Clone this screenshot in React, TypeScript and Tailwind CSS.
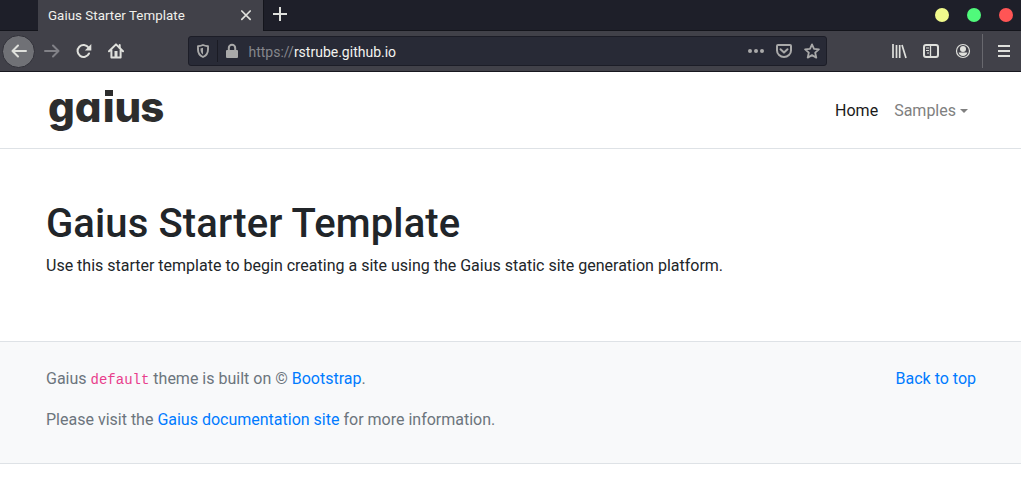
import type { ReactNode } from 'react';

function Icon({ children, className = '' }: { children: ReactNode; className?: string }) {
  return (
    <svg viewBox="0 0 16 16" className={`block size-4 shrink-0 ${className}`} fill="none" stroke="currentColor" strokeWidth="2" strokeLinecap="round" strokeLinejoin="round">
      {children}
    </svg>
  );
}

function TabBar() {
  return (
    <div className="flex h-[31px] bg-[#1e1f29] text-[#dfe0dc]">
      <div className="w-[38px] shrink-0 border-b border-[#14151c]" />
      <div className="flex w-[226px] shrink-0 items-center border-r border-[#14151c] bg-[#414149] pl-[10px] pr-[9px]">
        <span className="flex-1 whitespace-nowrap text-[13.33px] leading-[30px] tracking-[0.04px] text-[#f0f0ec]">Gaius Starter Template</span>
        <Icon>
          <path d="M3.800 3l8.400 8.400M12.200 3l-8.400 8.400" strokeWidth="1.7" />
        </Icon>
      </div>
      <div className="flex flex-1 items-center border-b border-[#14151c] pl-2 pr-2">
        <Icon className="-mt-[2px]">
          <path d="M8 1v14M1 8h14" strokeLinecap="butt" />
        </Icon>
        <div className="ml-auto flex gap-[18px]">
          <span className="size-[14px] rounded-full bg-[#f1fa8c]" />
          <span className="size-[14px] rounded-full bg-[#50fa7b]" />
          <span className="size-[14px] rounded-full bg-[#ff5555]" />
        </div>
      </div>
    </div>
  );
}

function AddressBar() {
  return (
    <div className="flex h-[30px] w-[639px] items-center rounded-[3px] border border-[#1c1d27] bg-[#282a36] px-[6px] text-[#a9a9a9]">
      <Icon>
        <path d="M8 2c-1.700 .8-3.400 1.100-5 1.300v3.200c0 3.500 1.500 5.900 5 7.500 3.500-1.600 5-4 5-7.500V3.300C11.400 3.100 9.700 2.800 8 2z" strokeWidth="1.9" />
        <path d="M8 4.800v6.700C6.200 10.300 5.500 8.800 5.500 5.500z" fill="currentColor" stroke="none" />
      </Icon>
      <div className="ml-[6px] mr-[6px] h-[22px] w-px bg-[#1a1b24]" />
      <Icon>
        <rect x="2" y="7" width="12" height="8" rx="1" fill="currentColor" stroke="none" />
        <path d="M4.800 8V5a3.200 3.200 0 0 1 6.400 0v3" />
      </Icon>
      <span className="ml-[8px] pl-[0.500px] pt-[2px] text-[14px] leading-5 text-[#85868c]">
        https://<span className="text-[#f3f3ef]">rstrube.github.io</span>
      </span>
      <div className="ml-auto flex gap-3">
        <Icon>
          <g fill="currentColor" stroke="none">
            <circle cx="2" cy="8" r="2" />
            <circle cx="8" cy="8" r="2" />
            <circle cx="14" cy="8" r="2" />
          </g>
        </Icon>
        <Icon>
          <path d="M2 2h12a1 1 0 0 1 1 1v4.500a7 6.500 0 0 1-14 0V3a1 1 0 0 1 1-1z" />
          <path d="M4.500 6.300L8 9.600l3.500-3.300" />
        </Icon>
        <Icon>
          <path d="M8 1.400l2 4.500 4.900.5-3.700 3.300 1.100 4.900L8 12.100l-4.300 2.500 1.100-4.900L1.100 6.400 6 5.900z" strokeWidth="1.800" />
        </Icon>
      </div>
    </div>
  );
}

function Toolbar() {
  return (
    <div className="flex h-[41px] items-center border-b border-[#17171f] bg-[#414149] pl-[2px] pr-[9px] text-[#dfe0dc]">
      <div className="flex size-[33px] items-center justify-center rounded-full border border-[#303038] bg-[#707176]">
        <Icon>
          <path d="M15 8H1.500M7 2.500L1.500 8 7 13.500" />
        </Icon>
      </div>
      <Icon className="ml-[9px] text-[#818187]">
        <path d="M1 8h13.500M9 2.500L14.500 8 9 13.500" />
      </Icon>
      <Icon className="ml-4">
        <path d="M13 10.500A6 6 0 1 1 12.500 4.500" />
        <path d="M15.300 1v6.500H8.800z" fill="currentColor" stroke="none" />
      </Icon>
      <Icon className="ml-4">
        <path d="M1 8.200L8 1.400l7 6.800M3.400 7v7.600h9.200V7" />
        <path d="M6.500 8h3v6h-3z" fill="currentColor" stroke="none" />
        <path d="M11.700 2v3" />
      </Icon>
      <div className="ml-16">
        <AddressBar />
      </div>
      <Icon className="ml-16">
        <path d="M2 1v14M5.500 2v13M8.700 2v13M11 2l4 13" strokeWidth="1.700" strokeLinecap="butt" />
      </Icon>
      <Icon className="ml-4">
        <rect x="1" y="2" width="14" height="12" rx="2" />
        <path d="M7.500 2v12" strokeWidth="1.300" />
        <path d="M3 5h3M3 7.500h3M4 10h2" strokeWidth="1" strokeLinecap="butt" />
      </Icon>
      <Icon className="ml-4">
        <circle cx="8" cy="8" r="6.500" strokeWidth="1.200" />
        <circle cx="8" cy="6" r="3" fill="currentColor" stroke="none" />
        <path d="M3.600 9.500h8.800c-.5 2-2.200 3.500-4.400 3.500s-3.900-1.500-4.400-3.500z" fill="currentColor" stroke="none" />
      </Icon>
      <div className="ml-[11px] h-[34px] w-px bg-[#68686e]" />
      <Icon className="ml-auto">
        <path d="M2 3h12M2 8h12M2 13h12" strokeLinecap="butt" />
      </Icon>
    </div>
  );
}

export default function App() {
  return (
    <div className="h-[478px] w-[1021px] overflow-hidden bg-white text-base text-[#212529] font-['Roboto',sans-serif]">
      <TabBar />
      <Toolbar />
      <header className="flex h-[77px] items-center justify-between border-b border-[#dee2e6] pl-[48px] pr-[53px]">
        <a className="-mt-[7px] text-[42px] font-extrabold leading-[44px] text-[#2d2d2d] font-['Inter',sans-serif] [font-feature-settings:'cv11']">
          ga
          <span className="relative ml-[1px]">
            i
            <span className="absolute left-[2px] top-[9px] h-[6px] w-[8px] bg-[#2d2d2d] ring-2 ring-white" />
          </span>
          <span className="tracking-[-1px]">us</span>
        </a>
        <nav className="flex items-center gap-4 pt-[2px]">
          <a className="text-[#1a1a1a]">Home</a>
          <a className="flex items-center gap-1 text-[#808080]">
            Samples
            <span className="border-x-[4.8px] border-t-[4.8px] border-x-transparent border-t-current" />
          </a>
        </nav>
      </header>
      <main className="h-[192px] px-[46px] pt-[51px]">
        <h1 className="mb-[6px] text-[40px] font-medium leading-[48px] tracking-[0.120px]">Gaius Starter Template</h1>
        <p className="leading-6">Use this starter template to begin creating a site using the Gaius static site generation platform.</p>
      </main>
      <footer className="flex h-[123px] justify-between border-y border-[#dee2e6] bg-[#f8f9fa] pl-[46px] pr-[45px] pt-[25px] leading-6 text-[#6c757d]">
        <div>
          <p className="mb-4">
            Gaius <code className="text-[14px] text-[#e83e8c] font-['Liberation_Mono',monospace]">default</code> theme is built on © <a className="text-[#007bff]">Bootstrap</a>.
          </p>
          <p>
            Please visit the <a className="text-[#007bff]">Gaius documentation site</a> for more information.
          </p>
        </div>
        <a className="text-[#007bff]">Back to top</a>
      </footer>
    </div>
  );
}
